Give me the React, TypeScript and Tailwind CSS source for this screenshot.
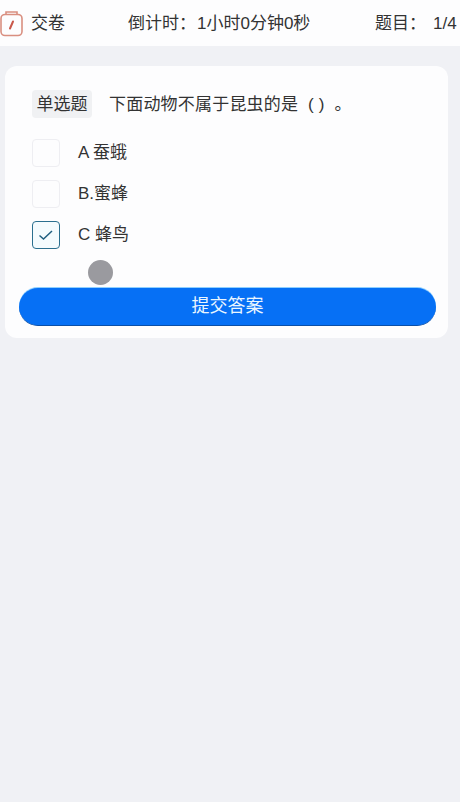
import React from 'react';

const options = [
  { label: 'A 蚕蛾', checked: false },
  { label: 'B.蜜蜂', checked: false },
  { label: 'C 蜂鸟', checked: true },
];

const App: React.FC = () => {
  return (
    <div className="relative min-h-[802px] overflow-hidden bg-[#f0f1f5] font-['Liberation_Sans','Noto_Sans_CJK_SC',sans-serif] text-[#333]">
      <header className="flex h-[46px] items-center bg-[#fdfdfe] text-[17px]">
        <div className="flex w-[128px] items-center">
          <svg width="24" height="28" viewBox="0 0 24 28" fill="none">
            <rect x="1" y="5.5" width="21" height="21" rx="4" stroke="#d98f80" strokeWidth="1.6" />
            <path d="M6 5.5V3H17V5.5" stroke="#d98f80" strokeWidth="1.6" />
            <path d="M10 19.5L13 12.5" stroke="#c9584a" strokeWidth="2" strokeLinecap="round" />
          </svg>
          <span className="ml-[7px] w-[34px] whitespace-nowrap pt-[1px]">交卷</span>
        </div>
        <div className="flex w-[247px] whitespace-nowrap pt-[1px]">
          <span>倒计时：</span>
          <span className="ml-[1px]">1小时0分钟0秒</span>
        </div>
        <div className="flex whitespace-nowrap pt-[1px]">
          <span>题目：</span>
          <span className="ml-[7px]">1/4</span>
        </div>
      </header>

      <main className="mx-[5px] mt-[20px] h-[272px] w-[443px] rounded-[12px] bg-[#fdfdfe] pt-[24px]">
        <div className="flex items-center pl-[27px]">
          <span className="flex h-[28px] w-[60px] items-center justify-center rounded-[4px] bg-[#f0f1f3] pt-[2px] text-[17px]">单选题</span>
          <span className="ml-[17px] whitespace-pre pt-[2px] text-[17px] tracking-[0.2px]">下面动物不属于昆虫的是  ( )  。</span>
        </div>

        <div className="mt-[21px] flex flex-col gap-[13px] pl-[27px]">
          {options.map((opt) => (
            <div key={opt.label} className="flex items-center">
              <span
                className={`flex h-[28px] w-[28px] items-center justify-center rounded-[4px] border ${
                  opt.checked ? 'border-[#2a6f8f] bg-[#f4fbfe]' : 'border-[#eeeef2] bg-[#fdfdfe]'
                }`}
              >
                {opt.checked && (
                  <svg width="16" height="12" viewBox="0 0 16 12" fill="none">
                    <path d="M1.5 6.5L5.5 10L14 2" stroke="#1f5f80" strokeWidth="1.5" />
                  </svg>
                )}
              </span>
              <span className="ml-[18px] text-[17px]">{opt.label}</span>
            </div>
          ))}
        </div>

        <button className="mx-[14px] mt-[39px] flex h-[38px] w-[417px] items-center justify-center rounded-full border-b border-[#0a4fa8] bg-[#0670f5] text-[18px] text-[#eaf6ff] shadow-[0_-1px_0_#8fd0ff]">
          提交答案
        </button>
      </main>

      <div className="absolute left-[88px] top-[260px] h-[25px] w-[25px] rounded-full bg-[#9a9a9f]" />
    </div>
  );
};

export default App;
